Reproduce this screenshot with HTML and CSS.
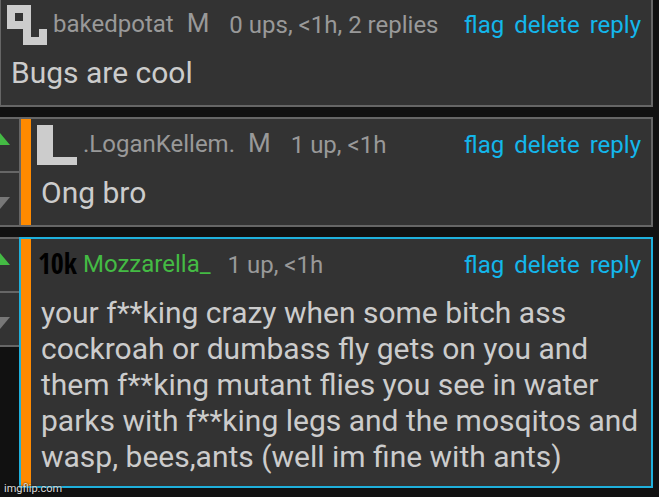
FILE: index.html
```
<!DOCTYPE html>
<html lang="en">
<head>
  <meta charset="utf-8">
  <meta name="viewport" content="width=device-width, initial-scale=1">
  <title>Comments - Imgflip</title>
  <link rel="stylesheet" href="styles.css">
</head>
<body>
  <div class="comments">

    <div class="comment-row">
      <div class="comment">
        <div class="comment-top">
          <svg class="user-icon" viewBox="0 0 5 5" shape-rendering="crispEdges" aria-hidden="true">
            <path fill="#ccc" fill-rule="evenodd" d="M0 0H3V4H4V3H5V5H2V3H0ZM1 1V2H2V1Z"/>
          </svg>
          <a class="username" href="#">bakedpotat</a>
          <span class="mod">M</span>
          <span class="info">0 ups, &lt;1h, 2 replies</span>
          <div class="actions">
            <a href="#">flag</a>
            <a href="#">delete</a>
            <a href="#">reply</a>
          </div>
        </div>
        <div class="comment-text">Bugs are cool</div>
      </div>
    </div>

    <div class="comment-row nested">
      <div class="votes">
        <button type="button" class="vote up voted" aria-label="Upvote"></button>
        <button type="button" class="vote down" aria-label="Downvote"></button>
      </div>
      <div class="comment">
        <div class="comment-top">
          <svg class="user-icon" viewBox="0 0 5 5" shape-rendering="crispEdges" aria-hidden="true">
            <path fill="#ccc" d="M0 0H2V4H5V5H0Z"/>
          </svg>
          <a class="username" href="#">.LoganKellem.</a>
          <span class="mod">M</span>
          <span class="info">1 up, &lt;1h</span>
          <div class="actions">
            <a href="#">flag</a>
            <a href="#">delete</a>
            <a href="#">reply</a>
          </div>
        </div>
        <div class="comment-text">Ong bro</div>
      </div>
    </div>

    <div class="comment-row nested">
      <div class="votes">
        <button type="button" class="vote up voted" aria-label="Upvote"></button>
        <button type="button" class="vote down" aria-label="Downvote"></button>
      </div>
      <div class="comment highlighted">
        <div class="comment-top">
          <span class="user-icon points-icon">10k</span>
          <a class="username green" href="#">Mozzarella_</a>
          <span class="info">1 up, &lt;1h</span>
          <div class="actions">
            <a href="#">flag</a>
            <a href="#">delete</a>
            <a href="#">reply</a>
          </div>
        </div>
        <div class="comment-text">your f**king crazy when some bitch ass cockroah or dumbass fly gets on you and them f**king mutant flies you see in water parks with f**king legs and the mosqitos and wasp, bees,ants (well im fine with ants)</div>
      </div>
    </div>

  </div>
  <div class="watermark">imgflip.com</div>
</body>
</html>
```
FILE: styles.css
```
body {
  margin: 0;
  background: #111;
  color: #ccc;
  font-family: Roboto, Arial, sans-serif;
  font-size: 24px;
  overflow: hidden;
}

a {
  text-decoration: none;
}

.comments {
  display: flex;
  flex-direction: column;
  gap: 10px;
  margin: -3px 6px 0 -1px;
}

.comment-row {
  display: flex;
  align-items: flex-start;
}

.comment-row.nested {
  margin-left: -20px;
}

.comment {
  flex: 1;
  min-width: 0;
  min-height: 110px;
  box-sizing: border-box;
  background: #333;
  border: 2px solid #666;
  padding: 6px 10px 11px 6px;
}

.nested .comment {
  box-shadow: inset 10px 0 #ff8a00;
  padding-left: 16px;
}

.comment.highlighted {
  border-color: #1fb0dc;
}

.comment-top {
  display: flex;
  align-items: flex-start;
  line-height: 40px;
}

.user-icon {
  flex: none;
  width: 40px;
  height: 40px;
  margin-right: 6px;
}

.points-icon {
  color: #000;
  font-family: "Open Sans Condensed", "Liberation Sans Narrow", sans-serif;
  font-size: 28px;
  line-height: 36px;
  text-align: right;
}

.username {
  margin-right: 13px;
  color: #999;
  line-height: 38px;
}

.username.green {
  color: #4b4;
}

.mod {
  margin-right: 16px;
  color: #999;
  font-size: 26px;
  line-height: 36px;
}

.info {
  margin-left: 4px;
  color: #999;
}

.actions {
  display: flex;
  gap: 10px;
  margin-left: auto;
}

.actions a {
  color: #13b6eb;
}

.comment-text {
  margin-top: 10px;
  padding-left: 4px;
  font-size: 30px;
  line-height: 36px;
}

.votes {
  flex: none;
  width: 38px;
  border: 2px solid #666;
  border-width: 2px 0 2px 2px;
}

.vote {
  display: flex;
  align-items: center;
  justify-content: center;
  width: 100%;
  height: 52px;
  padding: 0;
  border: 0;
  background: #333;
  cursor: pointer;
}

.vote.up {
  padding-bottom: 12px;
}

.vote.down {
  height: 54px;
  padding-top: 8px;
  border-top: 2px solid #666;
}

.vote::before {
  content: "";
  border: 10px solid transparent;
}

.vote.up::before {
  border-top: 0;
  border-bottom: 12px solid #777;
}

.vote.down::before {
  border-bottom: 0;
  border-top: 12px solid #777;
}

.vote.voted::before {
  border-bottom-color: #4b4;
}

.watermark {
  position: absolute;
  left: 4px;
  bottom: 1px;
  color: #ddd;
  font-size: 11px;
  line-height: 14px;
  text-shadow: 0 0 2px #000;
}
```
